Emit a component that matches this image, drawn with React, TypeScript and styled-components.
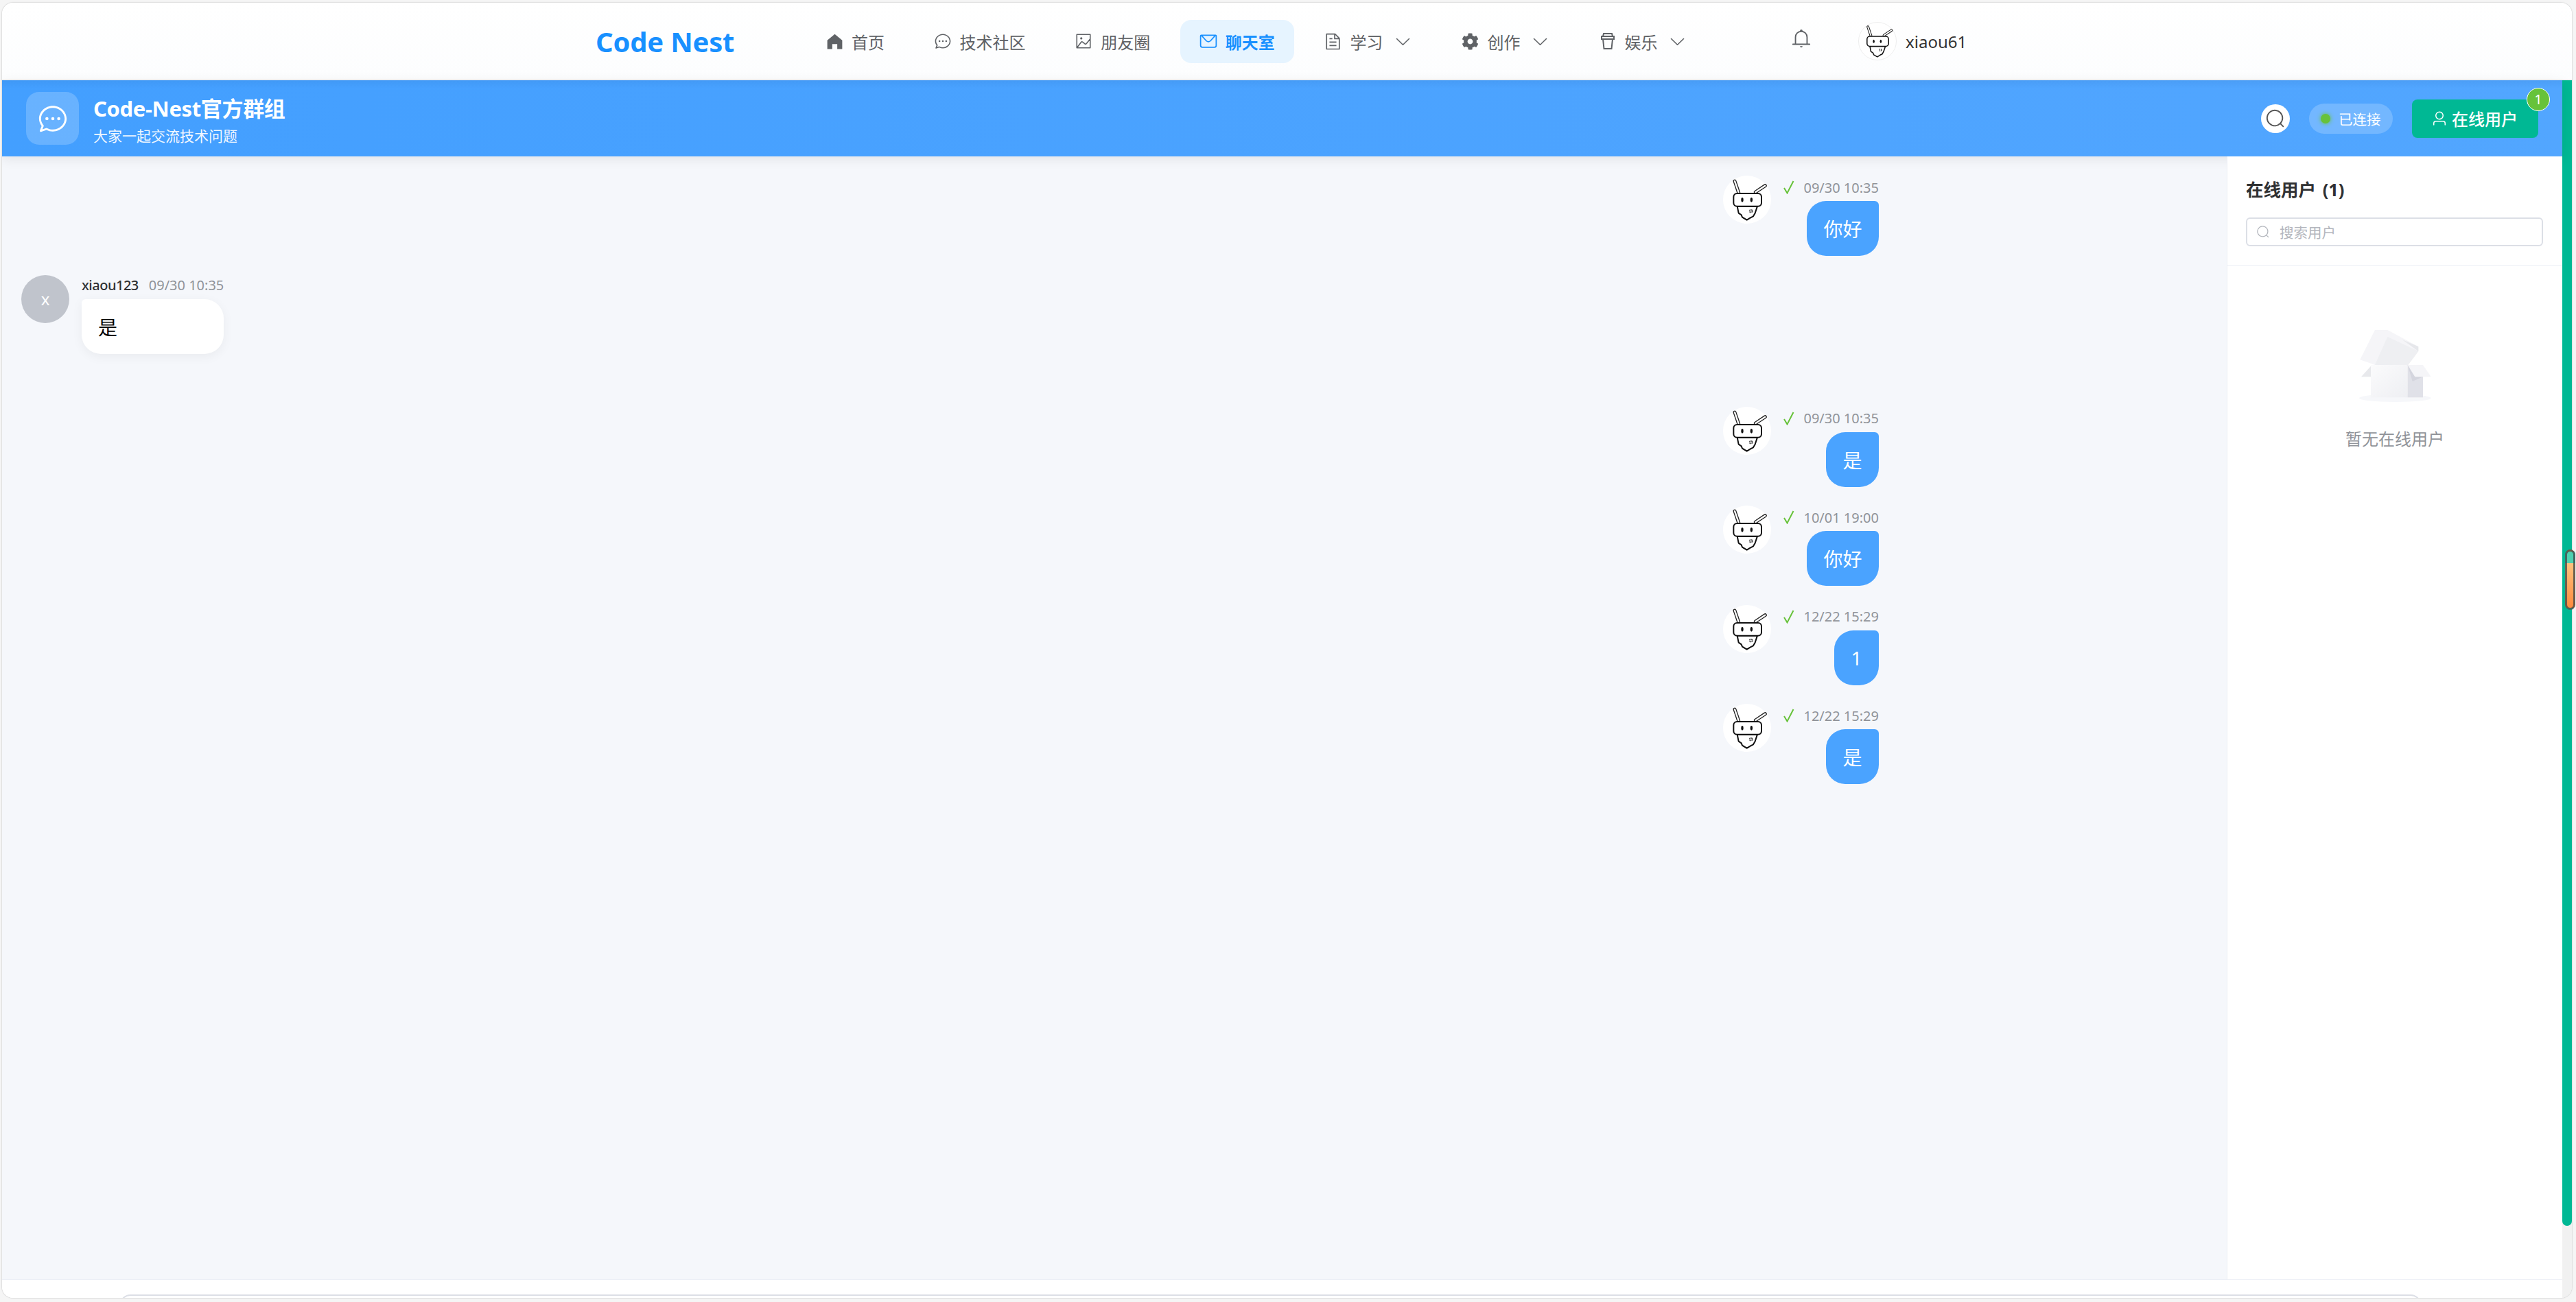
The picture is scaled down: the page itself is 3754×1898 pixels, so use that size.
import styled, { createGlobalStyle } from "styled-components";
import { FaCog } from "react-icons/fa";

const FONT = `"Noto Sans", "Noto Sans CJK SC", sans-serif`;

const ICONS = {
  home: "M512 128 128 447.936V896h255.936V640H640v256h255.936V447.936z",
  chat: "m174.72 855.68 135.296-45.12 23.68 11.84C388.096 849.536 448.576 864 512 864c211.84 0 384-166.784 384-352S723.84 160 512 160 128 326.784 128 512c0 69.12 24.96 139.264 70.848 199.232l22.08 28.8-46.272 115.584zm-45.248 82.56A32 32 0 0 1 89.6 896l58.368-145.92C94.72 680.32 64 596.864 64 512 64 299.904 256 96 512 96s448 203.904 448 416-192 416-448 416a461.056 461.056 0 0 1-206.912-48.384l-175.616 58.56zM512 563.2a51.2 51.2 0 1 1 0-102.4 51.2 51.2 0 0 1 0 102.4zm192 0a51.2 51.2 0 1 1 0-102.4 51.2 51.2 0 0 1 0 102.4zm-384 0a51.2 51.2 0 1 1 0-102.4 51.2 51.2 0 0 1 0 102.4z",
  picture:
    "M160 160v704h704V160H160zm-32-64h768a32 32 0 0 1 32 32v768a32 32 0 0 1-32 32H128a32 32 0 0 1-32-32V128a32 32 0 0 1 32-32zM384 288q64 0 64 64t-64 64q-64 0-64-64t64-64zM185.408 876.992l-50.816-38.912L350.72 556.032a96 96 0 0 1 134.592-17.856l1.856 1.472 122.88 99.136a32 32 0 0 0 44.992-4.864l216-269.888 49.92 39.936-215.808 269.824-.256.32a96 96 0 0 1-135.04 14.464l-122.88-99.072-.64-.512a32 32 0 0 0-44.8 5.952L185.408 876.992z",
  message:
    "M128 224v512a64 64 0 0 0 64 64h640a64 64 0 0 0 64-64V224H128zm0-64h768a64 64 0 0 1 64 64v512a128 128 0 0 1-128 128H192A128 128 0 0 1 64 736V224a64 64 0 0 1 64-64zM904 224 656.512 506.88a192 192 0 0 1-289.024 0L120 224h784zm-698.944 0 210.56 240.704a128 128 0 0 0 192.704 0L818.944 224H205.056z",
  document:
    "M832 384H576V128H192v768h640V384zm-26.496-64L640 154.496V320h165.504zM160 64h480l256 256v608a32 32 0 0 1-32 32H160a32 32 0 0 1-32-32V96a32 32 0 0 1 32-32zm160 448h384v64H320v-64zm0-192h160v64H320v-64zm0 384h384v64H320v-64z",
  arrow:
    "M831.872 340.864 512 652.672 192.128 340.864a30.592 30.592 0 0 0-42.752 0 29.12 29.12 0 0 0 0 41.6L489.664 714.24a32 32 0 0 0 44.672 0l340.288-331.712a29.12 29.12 0 0 0 0-41.728 30.592 30.592 0 0 0-42.752 0z",
  bell: "M512 64a64 64 0 0 1 64 64v64H448v-64a64 64 0 0 1 64-64zM256 768h512V448a256 256 0 1 0-512 0v320zm256-640a320 320 0 0 1 320 320v384H192V448a320 320 0 0 1 320-320zM96 768h832q32 0 32 32t-32 32H96q-32 0-32-32t32-32zm352 128h128a64 64 0 0 1-128 0z",
  search:
    "m795.904 750.72 124.992 124.928a32 32 0 0 1-45.248 45.248L750.656 795.904a416 416 0 1 1 45.248-45.248zM480 832a352 352 0 1 0 0-704 352 352 0 0 0 0 704z",
  user: "M512 512a192 192 0 1 0 0-384 192 192 0 0 0 0 384zm0 64a256 256 0 1 1 0-512 256 256 0 0 1 0 512zm320 320v-96a96 96 0 0 0-96-96H288a96 96 0 0 0-96 96v96a32 32 0 1 1-64 0v-96a160 160 0 0 1 160-160h448a160 160 0 0 1 160 160v96a32 32 0 1 1-64 0z",
};

type IconName = keyof typeof ICONS;

function Icon({ name, size }: { name: IconName; size: number }) {
  return (
    <svg width={size} height={size} viewBox="0 0 1024 1024" fill="currentColor">
      <path d={ICONS[name]} />
    </svg>
  );
}

function CupIcon() {
  return (
    <svg width="22" height="26" viewBox="0 0 22 26" fill="none" stroke="currentColor" strokeWidth="2">
      <path d="M4 6 5 2h12l1 4" />
      <rect x="2" y="6" width="18" height="4" />
      <path d="M4 10l1.5 14h11L18 10" />
    </svg>
  );
}

function RobotFace() {
  return (
    <svg viewBox="0 0 210 210" width="100%" height="100%">
      <g strokeLinecap="round">
        <path d="M51 24 68 74" stroke="#222" strokeWidth="15" />
        <path d="M51 24 68 74" stroke="#fff" strokeWidth="7" />
        <path d="M184 44 142 72" stroke="#222" strokeWidth="15" />
        <path d="M184 44 142 72" stroke="#fff" strokeWidth="7" />
      </g>
      <path
        d="M62 134 68 164 80 172 84 182 104 194 120 184 132 178 140 164 150 134Z"
        fill="#fff"
        stroke="#111"
        strokeWidth="6"
        strokeLinejoin="round"
      />
      <rect x="46" y="78" width="122" height="56" rx="15" fill="#fff" stroke="#111" strokeWidth="6" />
      <ellipse cx="84" cy="106" rx="5" ry="10" fill="#111" />
      <ellipse cx="124" cy="106" rx="5" ry="10" fill="#111" />
      <circle cx="122" cy="155" r="6" fill="none" stroke="#333" strokeWidth="5" strokeDasharray="6 3" />
    </svg>
  );
}

function EmptyBox() {
  return (
    <svg width="105" height="105" viewBox="0 0 313 315">
      <defs>
        <linearGradient id="boxFront" x1="0" y1="0" x2="1" y2="1">
          <stop offset="0" stopColor="#fbfbfc" />
          <stop offset="1" stopColor="#eeeff3" />
        </linearGradient>
      </defs>
      <ellipse cx="156" cy="298" rx="157" ry="17" fill="#f6f7fa" />
      <path d="M68 0H123L258 73V93L213 153H68L3 130Z" fill="#f5f5f8" />
      <path d="M123 30 258 93 213 153H68Z" fill="#eeeff2" />
      <path d="M188 43 258 73V93Z" fill="#e6e7eb" />
      <path d="M50 158 8 205H50Z" fill="#e8e9ec" />
      <rect x="50" y="153" width="161" height="142" fill="url(#boxFront)" />
      <rect x="211" y="153" width="67" height="142" fill="#e0e1e8" />
      <path d="M211 153 232 225 278 205H243Z" fill="#d4d5de" />
      <path d="M211 153H278L313 205H243Z" fill="#f5f5f8" />
    </svg>
  );
}

function SentMessage({ time, text }: { time: string; text: string }) {
  return (
    <SentRow>
      <Avatar>
        <RobotFace />
      </Avatar>
      <SentBody>
        <SentMeta>
          <svg width="16" height="20" viewBox="0 0 16 20" fill="none" stroke="#67c23a" strokeWidth="2">
            <path d="M1 11l4.5 7.5L14.5 1" />
          </svg>
          <TimeText>{time}</TimeText>
        </SentMeta>
        <SentBubble>{text}</SentBubble>
      </SentBody>
    </SentRow>
  );
}

function App() {
  return (
    <>
      <GlobalStyle />
      <Frame>
        <TopNav>
          <Logo>Code Nest</Logo>
          <NavList>
            <NavItem>
              <NavGlyph><Icon name="home" size={29} /></NavGlyph>
              首页
            </NavItem>
            <NavItem>
              <NavGlyph><Icon name="chat" size={26} /></NavGlyph>
              技术社区
            </NavItem>
            <NavItem>
              <NavGlyph><Icon name="picture" size={26} /></NavGlyph>
              朋友圈
            </NavItem>
            <NavItem $active>
              <NavGlyph><Icon name="message" size={28} /></NavGlyph>
              聊天室
            </NavItem>
            <NavItem $menu>
              <NavGlyph><Icon name="document" size={27} /></NavGlyph>
              学习
              <Caret><Icon name="arrow" size={27} /></Caret>
            </NavItem>
            <NavItem $menu>
              <NavGlyph><FaCog size={25} /></NavGlyph>
              创作
              <Caret><Icon name="arrow" size={27} /></Caret>
            </NavItem>
            <NavItem $menu>
              <NavGlyph><CupIcon /></NavGlyph>
              娱乐
              <Caret><Icon name="arrow" size={27} /></Caret>
            </NavItem>
          </NavList>
          <BellSlot><Icon name="bell" size={30} /></BellSlot>
          <NavUser>
            <NavAvatar><RobotFace /></NavAvatar>
            xiaou61
          </NavUser>
        </TopNav>

        <Body>
          <MainColumn>
            <RoomBar>
              <RoomIcon><Icon name="chat" size={46} /></RoomIcon>
              <RoomInfo>
                <RoomTitle>Code-Nest官方群组</RoomTitle>
                <RoomSub>大家一起交流技术问题</RoomSub>
              </RoomInfo>
              <RoomActions>
                <SearchRound><Icon name="search" size={30} /></SearchRound>
                <StatusPill>
                  <StatusDot />
                  已连接
                </StatusPill>
                <OnlineButton>
                  <Icon name="user" size={24} />
                  在线用户
                  <CountBadge>1</CountBadge>
                </OnlineButton>
              </RoomActions>
            </RoomBar>

            <ChatRow>
              <Messages>
                <SentMessage time="09/30 10:35" text="你好" />
                <ReceivedRow>
                  <LetterAvatar>x</LetterAvatar>
                  <ReceivedBody>
                    <ReceivedMeta>
                      <SenderName>xiaou123</SenderName>
                      <TimeText>09/30 10:35</TimeText>
                    </ReceivedMeta>
                    <ReceivedBubble>是</ReceivedBubble>
                  </ReceivedBody>
                </ReceivedRow>
                <SentMessage time="09/30 10:35" text="是" />
                <SentMessage time="10/01 19:00" text="你好" />
                <SentMessage time="12/22 15:29" text="1" />
                <SentMessage time="12/22 15:29" text="是" />
              </Messages>

              <UserPanel>
                <PanelHead>
                  <PanelTitle>在线用户 (1)</PanelTitle>
                  <UserSearch>
                    <Icon name="search" size={20} />
                    搜索用户
                  </UserSearch>
                </PanelHead>
                <EmptyState>
                  <EmptyBox />
                  <EmptyText>暂无在线用户</EmptyText>
                </EmptyState>
              </UserPanel>
            </ChatRow>

            <Composer>
              <ComposerInput />
            </Composer>
          </MainColumn>

          <ScrollTrack>
            <ScrollThumb />
          </ScrollTrack>
        </Body>
      </Frame>
      <ScrollHandle />
    </>
  );
}

const GlobalStyle = createGlobalStyle`
  html, body {
    height: 100%;
    overflow: hidden;
  }

  body {
    margin: 0;
    background: #f5f5f5;
    font-family: ${FONT};
  }
`;

const Frame = styled.div`
  height: 1888px;
  margin: 4px 6px 0 3px;
  display: flex;
  flex-direction: column;
  overflow: hidden;
  background: #fff;
  border-radius: 16px;
  box-shadow: 0 0 2px rgba(0, 0, 0, 0.3);
`;

const TopNav = styled.header`
  flex: 0 0 113px;
  display: flex;
  align-items: center;
  box-sizing: border-box;
  padding-left: 865px;
  background: linear-gradient(to bottom, #fff, #fcfdfe);
  border-bottom: 1px solid #e8e8e8;
`;

const Logo = styled.div`
  flex: 0 0 307px;
  font-size: 40px;
  font-weight: 700;
  color: #1890ff;
  letter-spacing: -0.2px;
`;

const NavList = styled.nav`
  display: flex;
  gap: 15.6px;
`;

const NavItem = styled.div<{ $active?: boolean; $menu?: boolean }>`
  display: flex;
  align-items: center;
  height: 63px;
  padding: 0 28px;
  border-radius: 16px;
  font-size: 24px;
  white-space: nowrap;
  font-weight: ${(p) => (p.$active ? 700 : 400)};
  color: ${(p) => (p.$active ? "#1890ff" : "#5f6266")};
  background: ${(p) => (p.$active ? "#e6f4ff" : "transparent")};
`;

const NavGlyph = styled.span`
  flex: 0 0 26px;
  min-width: 0;
  height: 28px;
  margin-right: 12px;
  display: flex;
  align-items: center;
  justify-content: center;

  svg {
    flex-shrink: 0;
  }
`;

const Caret = styled.span`
  margin-left: 15.5px;
  display: flex;
  color: #5f6266;
`;

const BellSlot = styled.div`
  margin-left: 124px;
  margin-bottom: 8px;
  display: flex;
  color: #5f6266;
`;

const NavUser = styled.div`
  margin-left: 68px;
  display: flex;
  align-items: center;
  gap: 13px;
  font-size: 24px;
  color: #333;
`;

const NavAvatar = styled.div`
  width: 56px;
  height: 56px;
  box-sizing: border-box;
  border: 1px solid #eee;
  border-radius: 50%;
  background: #fff;
`;

const Body = styled.div`
  flex: 1;
  min-height: 0;
  display: flex;
`;

const MainColumn = styled.div`
  flex: 1;
  min-width: 0;
  display: flex;
  flex-direction: column;
`;

const RoomBar = styled.div`
  flex: 0 0 111px;
  position: relative;
  z-index: 1;
  display: flex;
  align-items: center;
  padding: 0 35px;
  color: #fff;
  background:
    linear-gradient(to bottom, rgba(40, 110, 190, 0.14), rgba(40, 110, 190, 0) 12px),
    linear-gradient(to right, #439fff, #52a6ff);
  box-shadow: 0 4px 16px rgba(0, 0, 0, 0.08);
`;

const RoomIcon = styled.div`
  width: 77px;
  height: 77px;
  display: flex;
  align-items: center;
  justify-content: center;
  border-radius: 19px;
  background: rgba(255, 255, 255, 0.2);
`;

const RoomInfo = styled.div`
  margin-left: 21px;
  padding-top: 2px;
  display: flex;
  flex-direction: column;
  gap: 8px;
`;

const RoomTitle = styled.div`
  font-size: 31px;
  line-height: 40px;
  font-weight: 700;
  letter-spacing: -0.35px;
`;

const RoomSub = styled.div`
  font-size: 21px;
  line-height: 24px;
  opacity: 0.92;
`;

const RoomActions = styled.div`
  margin-left: auto;
  display: flex;
  align-items: center;
  gap: 28px;
`;

const SearchRound = styled.div`
  width: 42px;
  height: 42px;
  display: flex;
  align-items: center;
  justify-content: center;
  border-radius: 50%;
  background: #fff;
  color: #555;
`;

const StatusPill = styled.div`
  display: flex;
  align-items: center;
  gap: 12px;
  width: 122px;
  height: 44px;
  box-sizing: border-box;
  padding-left: 17px;
  border-radius: 22px;
  background: rgba(255, 255, 255, 0.2);
  font-size: 20.5px;
`;

const StatusDot = styled.span`
  width: 14px;
  height: 14px;
  border-radius: 50%;
  background: #67c23a;
  box-shadow: 0 0 6px #67c23a;
`;

const OnlineButton = styled.div`
  position: relative;
  width: 184px;
  height: 56px;
  box-sizing: border-box;
  padding-left: 28px;
  display: flex;
  align-items: center;
  gap: 6px;
  border-radius: 8px;
  background: #00b894;
  font-size: 24px;
  font-weight: 500;
`;

const CountBadge = styled.span`
  position: absolute;
  top: -17px;
  right: -17px;
  width: 34px;
  height: 34px;
  box-sizing: border-box;
  display: flex;
  align-items: center;
  justify-content: center;
  border: 1px solid #fff;
  border-radius: 50%;
  background: #67c23a;
  font-size: 20px;
  font-weight: 400;
`;

const ChatRow = styled.div`
  flex: 1;
  min-height: 0;
  display: flex;
`;

const Messages = styled.div`
  flex: 1;
  min-width: 0;
  display: flex;
  flex-direction: column;
  align-items: flex-start;
  padding: 28px 507px 0 28px;
  background: #f5f7fb;
`;

const SentRow = styled.div`
  align-self: flex-end;
  display: flex;
  gap: 18px;
  margin-bottom: 27.5px;
`;

const Avatar = styled.div`
  width: 70px;
  height: 70px;
  border-radius: 50%;
  background: #fff;
`;

const SentBody = styled.div`
  display: flex;
  flex-direction: column;
  align-items: flex-end;
`;

const SentMeta = styled.div`
  height: 37px;
  padding-bottom: 3px;
  box-sizing: border-box;
  display: flex;
  align-items: center;
  gap: 13px;
`;

const TimeText = styled.span`
  font-size: 20px;
  color: #909399;
  white-space: nowrap;
`;

const SentBubble = styled.div`
  height: 80px;
  display: flex;
  align-items: center;
  padding: 0 24.5px;
  border-radius: 28px 6px 28px 28px;
  background: #4aa3ff;
  color: #fff;
  font-size: 28px;
`;

const ReceivedRow = styled.div`
  display: flex;
  gap: 18px;
  margin-bottom: 77px;
`;

const LetterAvatar = styled.div`
  width: 70px;
  height: 70px;
  display: flex;
  align-items: center;
  justify-content: center;
  border-radius: 50%;
  background: #c0c4cc;
  color: #fff;
  font-size: 24px;
`;

const ReceivedBody = styled.div`
  display: flex;
  flex-direction: column;
`;

const ReceivedMeta = styled.div`
  height: 35px;
  padding-bottom: 5px;
  box-sizing: border-box;
  display: flex;
  align-items: center;
  gap: 15px;
`;

const SenderName = styled.span`
  font-size: 20px;
  font-weight: 500;
  color: #303133;
  letter-spacing: -0.5px;
`;

const ReceivedBubble = styled.div`
  height: 80px;
  display: flex;
  align-items: center;
  padding: 0 24px;
  border-radius: 6px 28px 28px 28px;
  background: #fff;
  color: #000;
  font-size: 28px;
  box-shadow: 0 4px 16px rgba(0, 0, 0, 0.05);
`;

const UserPanel = styled.aside`
  flex: 0 0 489px;
  box-sizing: border-box;
  position: relative;
  z-index: 2;
  background: #fff;
  border-left: 1px solid #ebeef5;
`;

const PanelHead = styled.div`
  padding: 33px 28px 28px 27px;
  border-bottom: 1px solid #ebeef5;
`;

const PanelTitle = styled.div`
  font-size: 25.5px;
  line-height: 30px;
  font-weight: 700;
  color: #303133;
  margin-bottom: 26px;
  word-spacing: 3px;
`;

const UserSearch = styled.div`
  height: 42px;
  box-sizing: border-box;
  display: flex;
  align-items: center;
  gap: 14px;
  padding-left: 13px;
  border: 2px solid #dcdfe6;
  border-radius: 6px;
  color: #b3b6bd;
  font-size: 20.5px;
`;

const EmptyState = styled.div`
  display: flex;
  flex-direction: column;
  align-items: center;
  padding-top: 93px;
`;

const EmptyText = styled.div`
  margin-top: 35px;
  font-size: 24px;
  color: #909399;
`;

const Composer = styled.div`
  flex: 0 0 27px;
  box-sizing: border-box;
  overflow: hidden;
  background: #fff;
  border-top: 1px solid #ebeef5;
  padding: 21px 205px 0 171px;
`;

const ComposerInput = styled.div`
  height: 60px;
  box-sizing: border-box;
  border: 2px solid #dcdfe6;
  border-radius: 16px;
`;

const ScrollTrack = styled.div`
  flex: 0 0 14px;
  background: #f1f1f1;
`;

const ScrollThumb = styled.div`
  height: 1670px;
  background: #00b894;
  border-radius: 0 0 7px 7px;
`;

const ScrollHandle = styled.div`
  position: fixed;
  left: 3738px;
  top: 801px;
  width: 15px;
  height: 88px;
  box-sizing: border-box;
  border: 3px solid rgba(60, 70, 70, 0.75);
  border-radius: 8px;
  background: linear-gradient(
    to bottom,
    #4fd0b0 0,
    #4fd0b0 17px,
    #ffc27e 17px,
    #ff8a3d 100%
  );
`;

export default App;
